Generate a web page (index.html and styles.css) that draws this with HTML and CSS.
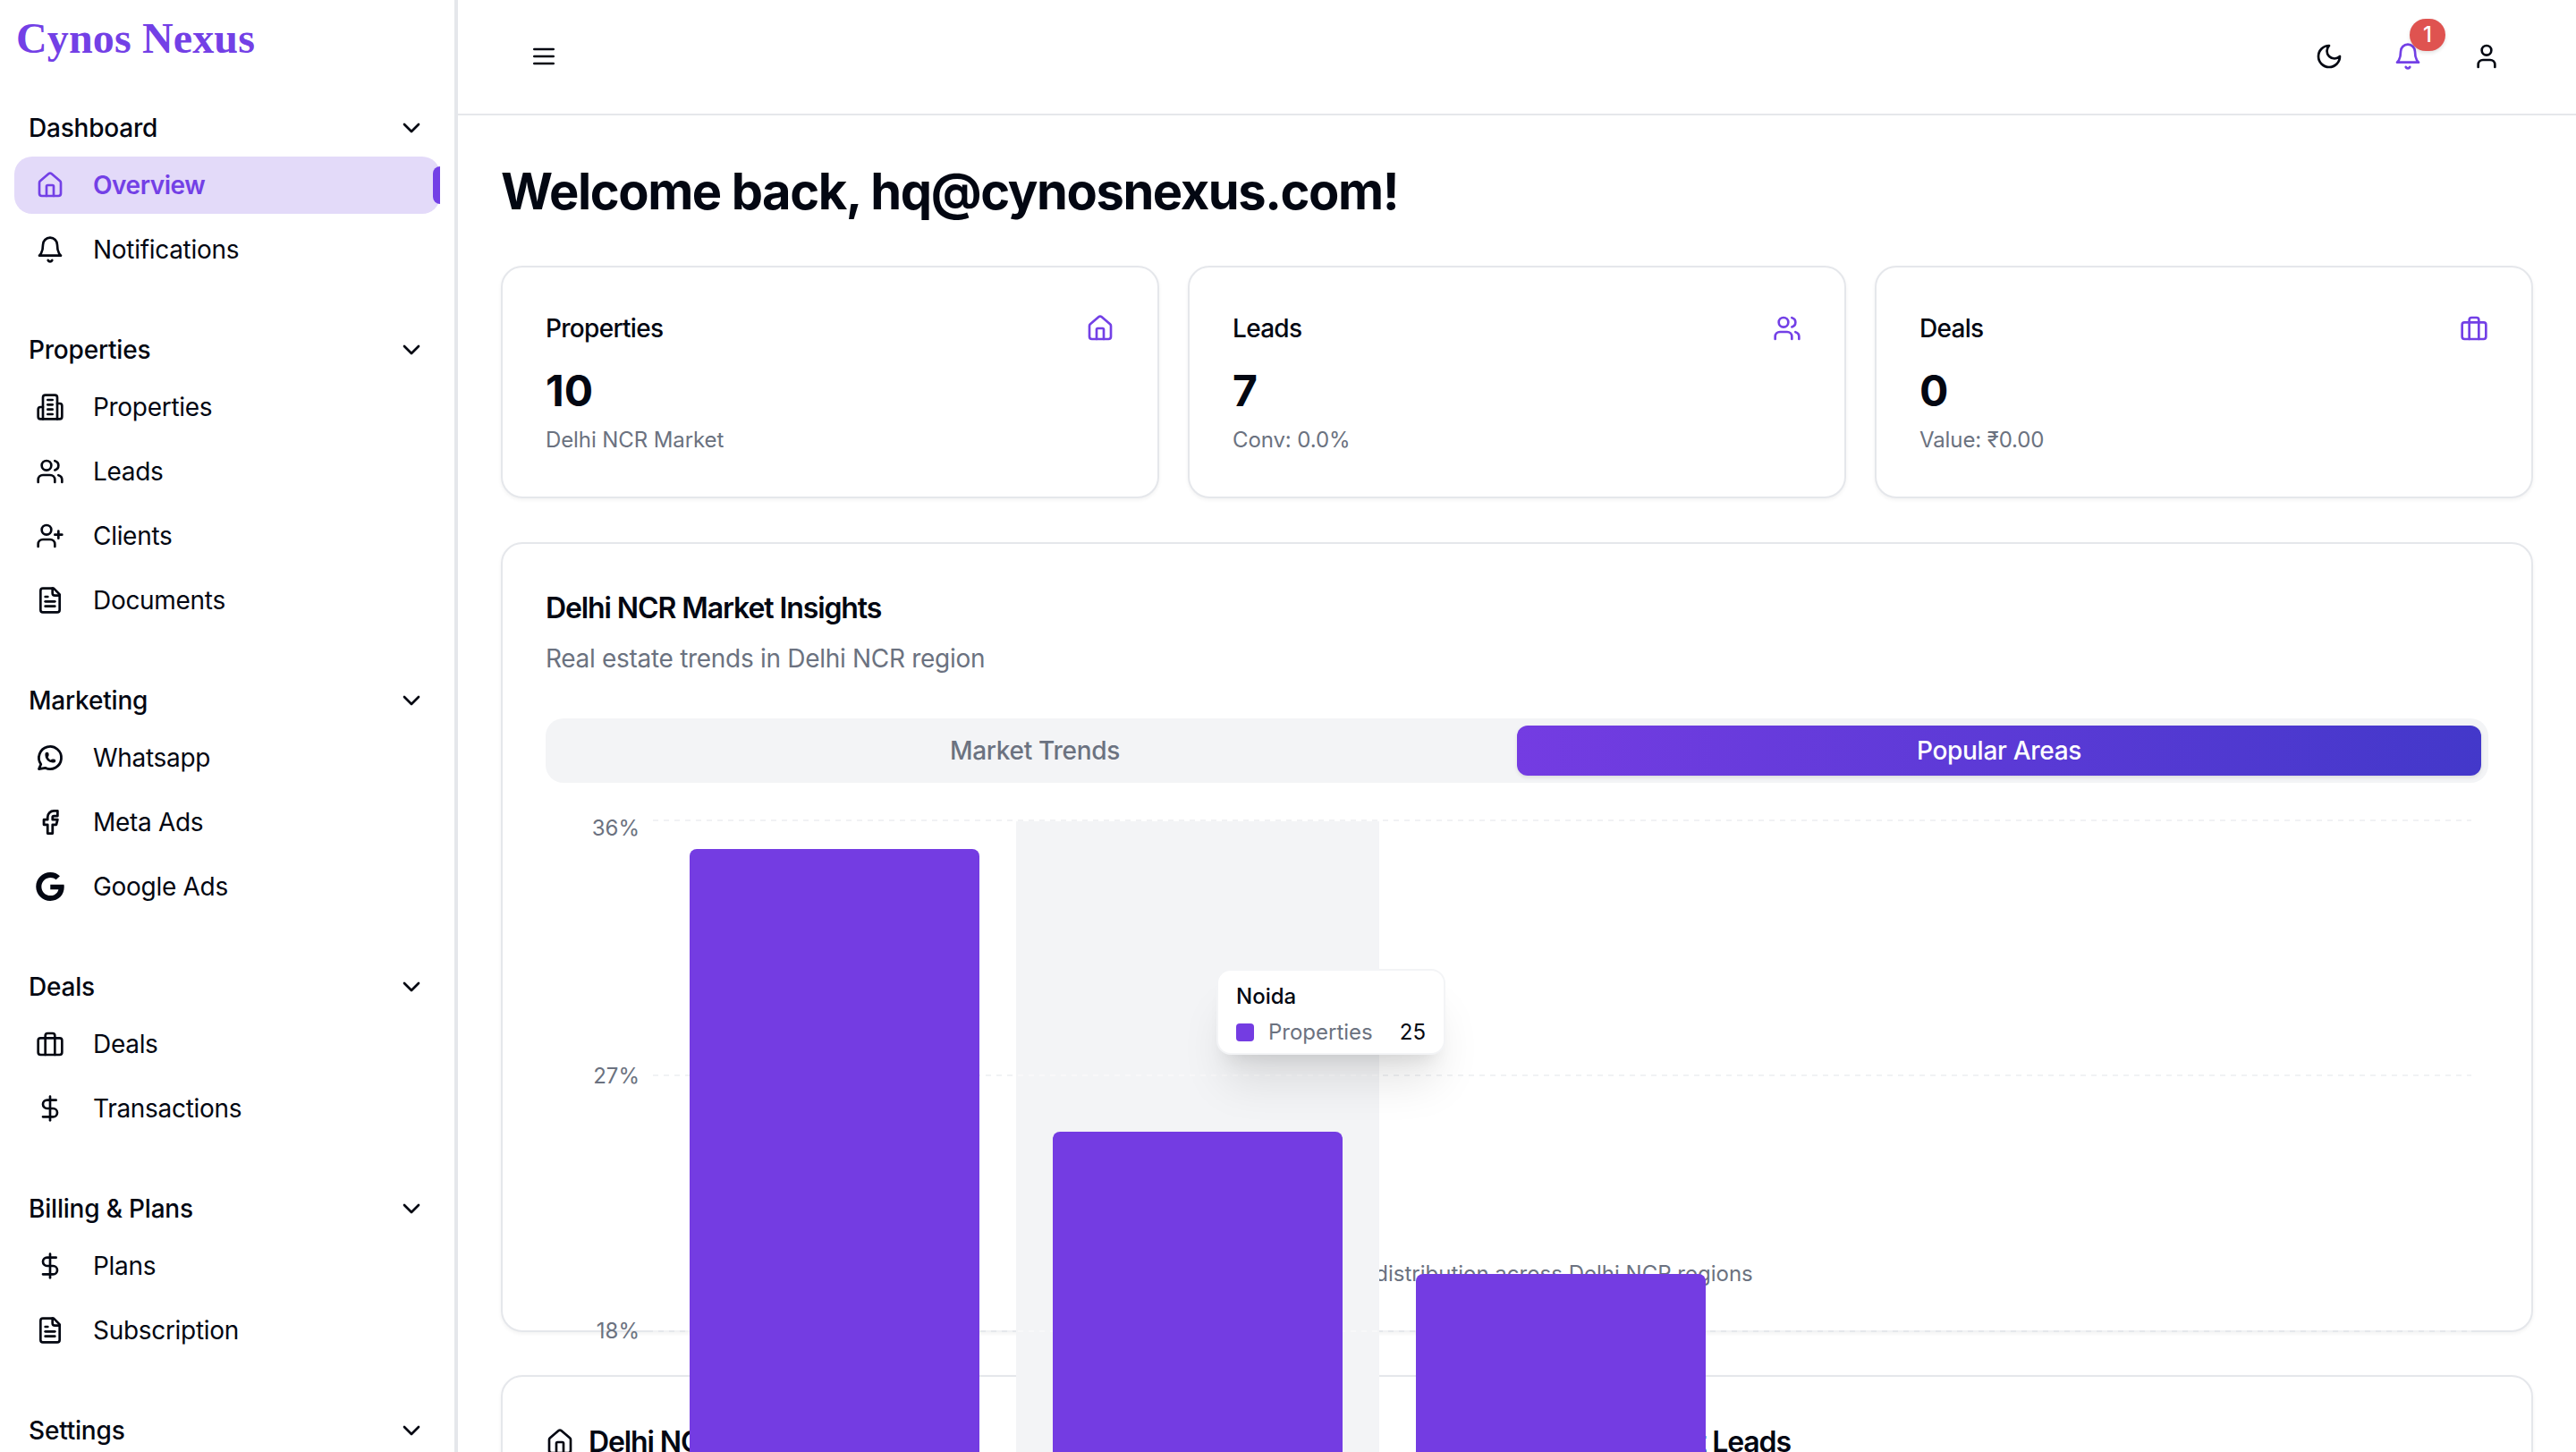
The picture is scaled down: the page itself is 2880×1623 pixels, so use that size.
FILE: index.html
```html
<!DOCTYPE html>
<html lang="en">
<head>
<meta charset="utf-8">
<title>Cynos Nexus</title>
<link rel="stylesheet" href="styles.css">
</head>
<body>
<svg class="sprite" xmlns="http://www.w3.org/2000/svg">
  <symbol id="i-house" viewBox="0 0 24 24"><path d="M15 21v-8a1 1 0 0 0-1-1h-4a1 1 0 0 0-1 1v8"/><path d="M3 10a2 2 0 0 1 .709-1.528l7-5.999a2 2 0 0 1 2.582 0l7 5.999A2 2 0 0 1 21 10v9a2 2 0 0 1-2 2H5a2 2 0 0 1-2-2z"/></symbol>
  <symbol id="i-bell" viewBox="0 0 24 24"><path d="M6 8a6 6 0 0 1 12 0c0 7 3 9 3 9H3s3-2 3-9"/><path d="M10.3 21a1.94 1.94 0 0 0 3.4 0"/></symbol>
  <symbol id="i-building" viewBox="0 0 24 24"><path d="M6 22V4a2 2 0 0 1 2-2h8a2 2 0 0 1 2 2v18Z"/><path d="M6 12H4a2 2 0 0 0-2 2v6a2 2 0 0 0 2 2h2"/><path d="M18 9h2a2 2 0 0 1 2 2v9a2 2 0 0 1-2 2h-2"/><path d="M10 6h4"/><path d="M10 10h4"/><path d="M10 14h4"/><path d="M10 18h4"/></symbol>
  <symbol id="i-users" viewBox="0 0 24 24"><path d="M16 21v-2a4 4 0 0 0-4-4H6a4 4 0 0 0-4 4v2"/><circle cx="9" cy="7" r="4"/><path d="M22 21v-2a4 4 0 0 0-3-3.87"/><path d="M16 3.13a4 4 0 0 1 0 7.75"/></symbol>
  <symbol id="i-userplus" viewBox="0 0 24 24"><path d="M16 21v-2a4 4 0 0 0-4-4H6a4 4 0 0 0-4 4v2"/><circle cx="9" cy="7" r="4"/><path d="M19 8v6"/><path d="M22 11h-6"/></symbol>
  <symbol id="i-file" viewBox="0 0 24 24"><path d="M15 2H6a2 2 0 0 0-2 2v16a2 2 0 0 0 2 2h12a2 2 0 0 0 2-2V7Z"/><path d="M14 2v4a2 2 0 0 0 2 2h4"/><path d="M10 9H8"/><path d="M16 13H8"/><path d="M16 17H8"/></symbol>
  <symbol id="i-whatsapp" viewBox="0.5 0.5 23 23"><path d="M3 21l1.65-3.8a9 9 0 1 1 3.4 2.9L3 21"/><path d="M9 10a.5.5 0 0 0 1 0V9a.5.5 0 0 0-1 0v1a5 5 0 0 0 5 5h1a.5.5 0 0 0 0-1h-1a.5.5 0 0 0 0 1"/></symbol>
  <symbol id="i-facebook" viewBox="0.5 0.5 23 23"><path d="M7 10v4h3v7h4v-7h3l1-4h-4V8a1 1 0 0 1 1-1h3V3h-3a5 5 0 0 0-5 5v2H7"/></symbol>
  <symbol id="i-google" viewBox="0 8 488 496"><path class="solid" d="M488 261.8C488 403.3 391.1 504 248 504 110.8 504 0 393.2 0 256S110.8 8 248 8c66.8 0 123 24.5 166.3 64.9l-67.5 64.9C258.5 52.6 94.3 116.6 94.3 256c0 86.5 69.1 156.6 153.7 156.6 98.2 0 135-70.4 140.8-106.9H248v-85.3h236.1c2.3 12.7 3.9 24.9 3.9 41.4z"/></symbol>
  <symbol id="i-briefcase" viewBox="0 0 24 24"><rect width="20" height="14" x="2" y="7" rx="2"/><path d="M16 21V5a2 2 0 0 0-2-2h-4a2 2 0 0 0-2 2v16"/></symbol>
  <symbol id="i-dollar" viewBox="0 0 24 24"><path d="M12 2v20"/><path d="M17 5H9.5a3.5 3.5 0 0 0 0 7h5a3.5 3.5 0 0 1 0 7H6"/></symbol>
  <symbol id="i-chevron" viewBox="0 0 24 24"><path d="m6 9 6 6 6-6"/></symbol>
  <symbol id="i-menu" viewBox="0 0 24 24"><path d="M4 12h16"/><path d="M4 6h16"/><path d="M4 18h16"/></symbol>
  <symbol id="i-moon" viewBox="0 0 24 24"><path d="M12 3a6 6 0 0 0 9 9 9 9 0 1 1-9-9Z"/></symbol>
  <symbol id="i-user" viewBox="0 0 24 24"><path d="M19 21v-2a4 4 0 0 0-4-4H9a4 4 0 0 0-4 4v2"/><circle cx="12" cy="7" r="4"/></symbol>
</svg>

<div class="app">
  <aside class="sidebar">
    <div class="brand">Cynos Nexus</div>

    <section class="nav-group">
      <div class="nav-head"><span>Dashboard</span><svg class="ic"><use href="#i-chevron"/></svg></div>
      <a class="nav-item is-active"><svg class="ic"><use href="#i-house"/></svg><span>Overview</span><i class="marker"></i></a>
      <a class="nav-item"><svg class="ic"><use href="#i-bell"/></svg><span>Notifications</span></a>
    </section>

    <section class="nav-group">
      <div class="nav-head"><span>Properties</span><svg class="ic"><use href="#i-chevron"/></svg></div>
      <a class="nav-item"><svg class="ic"><use href="#i-building"/></svg><span>Properties</span></a>
      <a class="nav-item"><svg class="ic"><use href="#i-users"/></svg><span>Leads</span></a>
      <a class="nav-item"><svg class="ic"><use href="#i-userplus"/></svg><span>Clients</span></a>
      <a class="nav-item"><svg class="ic"><use href="#i-file"/></svg><span>Documents</span></a>
    </section>

    <section class="nav-group">
      <div class="nav-head"><span>Marketing</span><svg class="ic"><use href="#i-chevron"/></svg></div>
      <a class="nav-item"><svg class="ic"><use href="#i-whatsapp"/></svg><span>Whatsapp</span></a>
      <a class="nav-item"><svg class="ic"><use href="#i-facebook"/></svg><span>Meta Ads</span></a>
      <a class="nav-item"><svg class="ic ic-solid"><use href="#i-google"/></svg><span>Google Ads</span></a>
    </section>

    <section class="nav-group">
      <div class="nav-head"><span>Deals</span><svg class="ic"><use href="#i-chevron"/></svg></div>
      <a class="nav-item"><svg class="ic"><use href="#i-briefcase"/></svg><span>Deals</span></a>
      <a class="nav-item"><svg class="ic"><use href="#i-dollar"/></svg><span>Transactions</span></a>
    </section>

    <section class="nav-group">
      <div class="nav-head"><span>Billing &amp; Plans</span><svg class="ic"><use href="#i-chevron"/></svg></div>
      <a class="nav-item"><svg class="ic"><use href="#i-dollar"/></svg><span>Plans</span></a>
      <a class="nav-item"><svg class="ic"><use href="#i-file"/></svg><span>Subscription</span></a>
    </section>

    <section class="nav-group">
      <div class="nav-head"><span>Settings</span><svg class="ic"><use href="#i-chevron"/></svg></div>
    </section>
  </aside>

  <div class="main">
    <header class="topbar">
      <button class="icon-btn"><svg class="ic"><use href="#i-menu"/></svg></button>
      <div class="top-actions">
        <button class="icon-btn"><svg class="ic"><use href="#i-moon"/></svg></button>
        <button class="icon-btn icon-btn-accent"><svg class="ic"><use href="#i-bell"/></svg><span class="badge">1</span></button>
        <button class="icon-btn"><svg class="ic"><use href="#i-user"/></svg></button>
      </div>
    </header>

    <main class="content">
      <h1 class="welcome">Welcome back, hq@cynosnexus.com!</h1>

      <div class="stats">
        <div class="card stat">
          <div class="stat-top"><span>Properties</span><svg class="ic accent"><use href="#i-house"/></svg></div>
          <div class="stat-value">10</div>
          <div class="stat-sub">Delhi NCR Market</div>
        </div>
        <div class="card stat">
          <div class="stat-top"><span>Leads</span><svg class="ic accent"><use href="#i-users"/></svg></div>
          <div class="stat-value">7</div>
          <div class="stat-sub">Conv: 0.0%</div>
        </div>
        <div class="card stat">
          <div class="stat-top"><span>Deals</span><svg class="ic accent"><use href="#i-briefcase"/></svg></div>
          <div class="stat-value">0</div>
          <div class="stat-sub">Value: ₹0.00</div>
        </div>
      </div>

      <div class="card insights">
        <h2 class="card-title">Delhi NCR Market Insights</h2>
        <p class="card-sub">Real estate trends in Delhi NCR region</p>
        <div class="tabs">
          <div class="tab">Market Trends</div>
          <div class="tab is-selected">Popular Areas</div>
        </div>
        <div class="chart">
          <svg class="chart-svg" viewBox="0 0 2172 483" width="2172" height="483">
            <rect class="cursor" x="526" y="10" width="406" height="760"/>
            <g class="grid">
              <path d="M120 9H2153"/>
              <path d="M120 294H2153"/>
              <path d="M120 580H2153"/>
            </g>
            <g class="grid grid-on-band">
              <path d="M528 294H932"/>
              <path d="M528 580H932"/>
            </g>
            <g class="axis">
              <text x="105" y="26">36%</text>
              <text x="105" y="303">27%</text>
              <text x="105" y="588">18%</text>
            </g>
            <g class="bars">
              <path d="M161 760V49a8 8 0 0 1 8-8h308a8 8 0 0 1 8 8V760Z"/>
              <path d="M567 760V365a8 8 0 0 1 8-8h308a8 8 0 0 1 8 8V760Z"/>
              <path d="M973 760V524a8 8 0 0 1 8-8h308a8 8 0 0 1 8 8V760Z"/>
            </g>
          </svg>
          <div class="tooltip">
            <div class="tooltip-title">Noida</div>
            <div class="tooltip-row"><i class="swatch"></i><span class="tooltip-key">Properties</span><span class="tooltip-val">25</span></div>
          </div>
        </div>
        <p class="chart-note">Property distribution across Delhi NCR regions</p>
      </div>

      <div class="lists">
        <div class="card list-card">
          <h3 class="list-title"><svg class="ic"><use href="#i-house"/></svg>Delhi NCR Properties</h3>
        </div>
        <div class="card list-card">
          <h3 class="list-title list-title-tight"><svg class="ic"><use href="#i-users"/></svg>Recent Leads</h3>
        </div>
      </div>
    </main>
  </div>
</div>
</body>
</html>
```

FILE: styles.css
```css
* { box-sizing: border-box; }

html, body {
  margin: 0;
  height: 100%;
  overflow: hidden;
  background: #fff;
}

body {
  font-family: Inter, "Liberation Sans", sans-serif;
  color: #030712;
}

.sprite { display: none; }

.ic {
  width: 32px;
  height: 32px;
  flex: none;
  fill: none;
  stroke: currentColor;
  stroke-width: 2;
  stroke-linecap: round;
  stroke-linejoin: round;
}

.ic-solid { fill: currentColor; stroke: none; }
.accent { color: #7340e6; }

.app {
  display: flex;
  height: 1623px;
  overflow: hidden;
}

/* Sidebar */
.sidebar {
  width: 512px;
  flex: none;
  height: 100%;
  overflow: hidden;
  padding: 0 16px;
  border-right: 4px solid #e5e7eb;
}

.brand {
  height: 119px;
  padding: 15px 0 0 2px;
  font-family: "Liberation Serif", serif;
  font-weight: 700;
  font-size: 48px;
  line-height: 56px;
  letter-spacing: 0.15px;
  color: #7340e6;
}

.nav-group {
  display: flex;
  flex-direction: column;
  gap: 8px;
  margin-bottom: 56px;
}

.nav-head {
  display: flex;
  align-items: center;
  justify-content: space-between;
  height: 48px;
  padding: 0 16px;
  font-size: 28px;
  font-weight: 500;
  letter-spacing: -0.2px;
}

.nav-item {
  position: relative;
  display: flex;
  align-items: center;
  gap: 32px;
  height: 64px;
  padding-left: 24px;
  font-size: 28px;
  letter-spacing: -0.3px;
  border-radius: 20px;
}

.nav-item.is-active {
  background: #e3daf9;
  color: #7340e6;
  font-weight: 600;
  letter-spacing: -0.45px;
}

.marker {
  position: absolute;
  right: 0;
  top: 11px;
  width: 8px;
  height: 42px;
  background: #7340e6;
  border-radius: 8px 0 0 8px;
}

/* Main */
.main {
  flex: 1;
  min-width: 0;
  display: flex;
  flex-direction: column;
}

.topbar {
  flex: none;
  height: 129px;
  display: flex;
  align-items: center;
  justify-content: space-between;
  padding: 0 68px 2px 64px;
  border-bottom: 2px solid #e5e7eb;
}

.top-actions {
  display: flex;
  gap: 24px;
}

.icon-btn {
  position: relative;
  display: flex;
  align-items: center;
  justify-content: center;
  width: 64px;
  height: 64px;
  padding: 0;
  border: 0;
  background: none;
  color: #030712;
}

.icon-btn-accent { color: #7340e6; }

.badge {
  position: absolute;
  left: 34px;
  top: -10px;
  width: 40px;
  height: 36px;
  display: flex;
  align-items: center;
  justify-content: center;
  border-radius: 18px;
  background: #df5350;
  color: #fff;
  font: 500 24px Inter, sans-serif;
  box-shadow: 0 2px 4px rgba(0, 0, 0, .12);
}

.content {
  flex: 1;
  padding: 49px 48px 0;
  overflow: hidden;
}

.welcome {
  margin: 0 0 47px;
  font-size: 56px;
  line-height: 72px;
  font-weight: 700;
  letter-spacing: -1.4px;
}

.card {
  background: #fff;
  border: 2px solid #e5e7eb;
  border-radius: 24px;
  box-shadow: 0 2px 4px rgba(0, 0, 0, .05);
}

.stats {
  display: grid;
  grid-template-columns: repeat(3, 1fr);
  gap: 32px;
  margin-bottom: 49px;
}

.stat { padding: 48px 48px 47px; }

.stat-top {
  display: flex;
  align-items: center;
  justify-content: space-between;
  height: 40px;
  font-size: 28px;
  font-weight: 500;
  letter-spacing: -0.7px;
}

.stat-value {
  margin-top: 11px;
  font-size: 48px;
  line-height: 78px;
  font-weight: 700;
}

.stat-sub {
  font-size: 24px;
  line-height: 32px;
  letter-spacing: -0.1px;
  color: #6b7280;
}

.insights {
  padding: 48px 48px 47px;
  margin-bottom: 48px;
}

.card-title {
  margin: 0;
  font-size: 32px;
  line-height: 48px;
  font-weight: 600;
  letter-spacing: -1.1px;
}

.card-sub {
  margin: 12px 0 47px;
  font-size: 28px;
  line-height: 40px;
  letter-spacing: -0.3px;
  color: #6b7280;
}

.tabs {
  display: grid;
  grid-template-columns: 1fr 1fr;
  height: 72px;
  padding: 8px;
  border-radius: 20px;
  background: #f3f4f6;
}

.tab {
  display: flex;
  align-items: center;
  justify-content: center;
  border-radius: 12px;
  font-size: 28px;
  font-weight: 500;
  letter-spacing: -0.3px;
  color: #6b7280;
}

.tab.is-selected {
  color: #fff;
  background: linear-gradient(to right, #743ce2, #4338ca);
  box-shadow: 0 2px 4px rgba(0, 0, 0, .1);
}

.chart {
  position: relative;
  height: 483px;
  margin-top: 33px;
}

.chart-svg {
  position: relative;
  z-index: 2;
  display: block;
  overflow: visible;
}

.cursor { fill: #f3f4f6; }

.grid path {
  fill: none;
  stroke: #f1f2f4;
  stroke-width: 2;
  stroke-dasharray: 6 6;
}

.grid-on-band path { stroke: #f8f8f9; }

.axis text {
  font-family: Inter, sans-serif;
  font-size: 24px;
  fill: #6b7280;
  text-anchor: end;
}

.bars path { fill: #743ce2; }

.tooltip {
  position: absolute;
  z-index: 3;
  left: 750px;
  top: 175px;
  width: 256px;
  height: 96px;
  padding: 13px 20px;
  background: #fff;
  border: 2px solid #f3f4f6;
  border-radius: 16px;
  font-size: 24px;
  line-height: 32px;
  box-shadow: 0 40px 50px -10px rgba(0, 0, 0, .1), 0 16px 20px -12px rgba(0, 0, 0, .1);
}

.tooltip-title { font-weight: 500; }

.tooltip-row {
  display: flex;
  align-items: center;
  margin-top: 8px;
}

.swatch {
  width: 20px;
  height: 20px;
  border-radius: 4px;
  background: #743ce2;
  margin-right: 16px;
}

.tooltip-key { flex: 1; color: #6b7280; }
.tooltip-val { font-weight: 400; }

.chart-note {
  margin: 17px 0 0;
  font-size: 24px;
  line-height: 32px;
  text-align: center;
  color: #6b7280;
}

.lists {
  display: grid;
  grid-template-columns: 1fr 1fr;
  gap: 32px;
}

.list-card {
  height: 400px;
  padding: 49px 48px 48px;
}

.list-title {
  display: flex;
  align-items: center;
  gap: 16px;
  margin: 0;
  font-size: 32px;
  line-height: 48px;
  font-weight: 600;
  letter-spacing: -1.1px;
}

.list-title-tight { gap: 12px; }
```
